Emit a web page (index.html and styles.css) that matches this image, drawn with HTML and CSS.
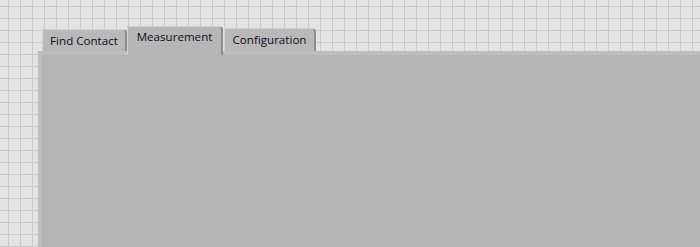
FILE: index.html
```html
<!DOCTYPE html>
<html>
<head>
<meta charset="utf-8">
<link rel="stylesheet" href="styles.css">
</head>
<body>
<div class="front-panel">
  <div class="tab-control">
    <div class="tabs">
      <div class="tab tab-find">Find Contact</div>
      <div class="tab tab-active">Measurement</div>
      <div class="tab tab-config">Configuration</div>
    </div>
    <div class="page"></div>
  </div>
</div>
</body>
</html>
```

FILE: styles.css
```css
html, body {
  margin: 0;
  padding: 0;
  width: 700px;
  height: 247px;
  overflow: hidden;
}
body {
  background-color: #e3e3e3;
  background-image:
    linear-gradient(to right, #c9c9c9 1px, transparent 1px),
    linear-gradient(to bottom, #c9c9c9 1px, transparent 1px);
  background-size: 12px 12px;
  background-position: 8px 6px;
  font-family: "Open Sans", "Noto Sans", sans-serif;
}
.front-panel {
  height: 247px;
  padding: 26px 0 0 38px;
  box-sizing: border-box;
  display: flex;
}
.tab-control {
  flex: 1;
  display: flex;
  flex-direction: column;
}
.tabs {
  display: flex;
  align-items: flex-end;
  padding-left: 4px;
  height: 25px;
  position: relative;
  z-index: 1;
}
.tab {
  box-sizing: border-box;
  height: 22px;
  background: #b9b9b9;
  border-top: 1px solid #cfcfcf;
  border-left: 1px solid #d2d2d2;
  border-right: 2px solid #8e8e8e;
  border-top-right-radius: 4px;
  color: #150a1e;
  font-size: 11.6px;
  line-height: 20px;
  text-align: center;
  white-space: nowrap;
}
.tab-find {
  width: 85px;
  padding-top: 1px;
}
.tab-active {
  width: 96px;
  height: 29px;
  margin-bottom: -4px;
  background: #b6b6b6;
  line-height: 20px;
  padding-bottom: 7px;
}
.tab-config {
  width: 92px;
  margin-left: 1px;
  height: 23px;
  padding-top: 1px;
}
.page {
  flex: 1;
  background: #b4b4b4;
  border-top: 4px solid #bdbdbd;
  border-left: 4px solid #bebebe;
}
```
